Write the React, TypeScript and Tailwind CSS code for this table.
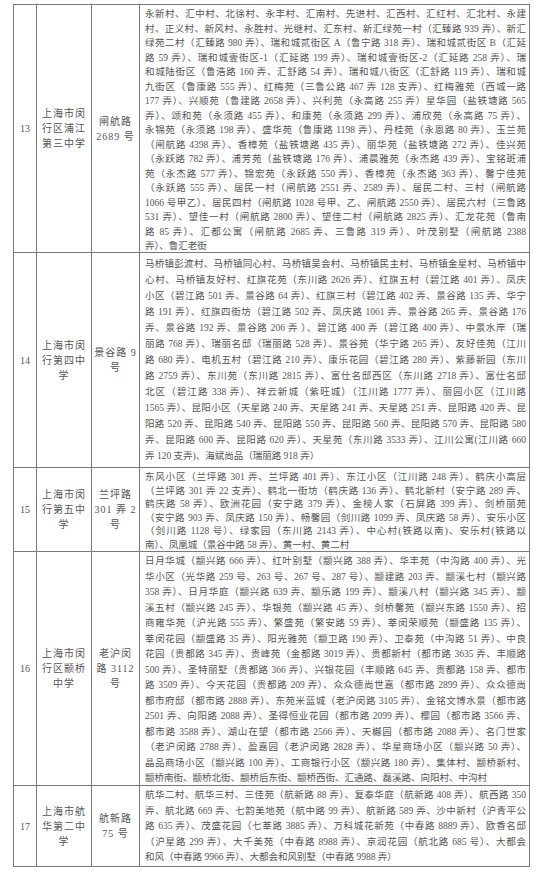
import React from "react";

type Row = {
  no: string;
  school: string[];
  addr: string[];
  lines: string[];
  h: string;
  lead: string;
  pt: string;
};

const rows: Row[] = [
  {
    no: "13",
    school: ["上海市闵", "行区浦江", "第三中学"],
    addr: ["闸航路", "2689 号"],
    h: "h-[248px]",
    lead: "leading-[14.5px]",
    pt: "pt-[2px]",
    lines: [
      "永新村、汇中村、北徐村、永丰村、汇南村、先进村、汇西村、汇红村、汇北村、永建",
      "村、正义村、新风村、永胜村、光继村、汇东村、新汇绿苑一村（汇臻路 939 弄）、新汇",
      "绿苑二村（汇臻路 980 弄）、瑞和城贰街区 A（鲁宁路 318 弄）、瑞和城贰街区 B（汇延",
      "路 59 弄）、瑞和城壹街区-1（汇延路 199 弄）、瑞和城壹街区-2（汇延路 258 弄）、瑞",
      "和城陆街区（鲁浩路 160 弄、汇舒路 54 弄）、瑞和城八街区（汇舒路 119 弄）、瑞和城",
      "九街区（鲁康路 555 弄）、红梅苑（三鲁公路 467 弄 128 支弄）、红梅雅苑（西城一路",
      "177 弄）、兴顺苑（鲁建路 2658 弄）、兴利苑（永高路 255 弄）星华园（盐铁塘路 565",
      "弄）、颂和苑（永须路 455 弄）、和康苑（永须路 299 弄）、浦欣苑（永高路 75 弄）、",
      "永锦苑（永须路 198 弄）、盛华苑（鲁康路 1198 弄）、丹桂苑（永恩路 80 弄）、玉兰苑",
      "（闸航路 4398 弄）、香樟苑（盐铁塘路 435 弄）、丽华苑（盐铁塘路 272 弄）、佳兴苑",
      "（永跃路 782 弄）、浦芳苑（盐铁塘路 176 弄）、浦晨雅苑（永杰路 439 弄）、宝铭斑浦",
      "苑（永杰路 577 弄）、锦宏苑（永跃路 550 弄）、香樟苑（永杰路 363 弄）、馨宁佳苑",
      "（永跃路 555 弄）、居民一村（闸航路 2551 弄、2589 弄）、居民二村、三村（闸航路",
      "1066 号甲乙）、居民四村（闸航路 1028 号甲、乙、闸航路 2550 弄）、居民六村（三鲁路",
      "531 弄）、望佳一村（闸航路 2800 弄）、望佳二村（闸航路 2825 弄）、汇龙花苑（鲁南",
      "路 85 弄）、汇都公寓（闸航路 2685 弄、三鲁路 319 弄）、叶茂别墅（闸航路 2388",
      "弄）、鲁汇老街",
    ],
  },
  {
    no: "14",
    school: ["上海市闵", "行第四中", "学"],
    addr: ["景谷路 9", "号"],
    h: "h-[215px]",
    lead: "leading-[16px]",
    pt: "pt-[3px]",
    lines: [
      "马桥镇彭渡村、马桥镇同心村、马桥镇吴会村、马桥镇民主村、马桥镇金星村、马桥镇中",
      "心村、马桥镇友好村、红旗花苑（东川路 2626 弄）、红旗五村（碧江路 401 弄）、凤庆",
      "小区（碧江路 501 弄、景谷路 64 弄）、红旗三村（碧江路 402 弄、景谷路 135 弄、华宁",
      "路 191 弄）、红旗四街坊（碧江路 502 弄、凤庆路 1061 弄、景谷路 265 弄、景谷路 176",
      "弄、景谷路 192 弄、景谷路 206 弄 ）、碧江路 400 弄（碧江路 400 弄）、中景水岸（瑞",
      "丽路 768 弄）、瑞丽名邸（瑞丽路 528 弄）、景谷苑（华宁路 265 弄）、友好佳苑（江川",
      "路 680 弄）、电机五村（碧江路 210 弄）、康乐花园（碧江路 280 弄）、紫藤新园（东川",
      "路 2759 弄）、东川苑（东川路 2815 弄）、富仕名邸西区（东川路 2718 弄）、富仕名邸",
      "北区（碧江路 338 弄）、祥云新城（紫旺城）（江川路 1777 弄）、丽园小区（江川路",
      "1565 弄）、昆阳小区（天星路 240 弄、天星路 241 弄、天星路 251 弄、昆阳路 420 弄、昆",
      "阳路 520 弄、昆阳路 540 弄、昆阳路 550 弄、昆阳路 560 弄、昆阳路 570 弄、昆阳路 580",
      "弄、昆阳路 600 弄、昆阳路 620 弄）、天星苑（东川路 3533 弄）、江川公寓(江川路 660",
      "弄 120 支弄)、海斌尚品（瑞丽路 918 弄）",
    ],
  },
  {
    no: "15",
    school: ["上海市闵", "行第五中", "学"],
    addr: ["兰坪路", "301 弄 2", "号"],
    h: "h-[84px]",
    lead: "leading-[13.5px]",
    pt: "pt-[3px]",
    lines: [
      "东风小区（兰坪路 301 弄、兰坪路 401 弄）、东江小区（江川路 248 弄）、鹤庆小高层",
      "（兰坪路 301 弄 22 支弄）、鹤北一街坊（鹤庆路 136 弄）、鹤北新村（安宁路 289 弄、",
      "鹤庆路 58 弄）、欧洲花园（安宁路 379 弄）、金榜人家（石屏路 399 弄）、剑桥丽苑",
      "（安宁路 903 弄、凤庆路 150 弄）、畅馨园（剑川路 1099 弄、凤庆路 58 弄）、安乐小区",
      "（剑川路 1128 号）、绿家园（东川路 2143 弄）、中心村(铁路以南)、安乐村(铁路以",
      "南）、凤凰城（景谷中路 58 弄）、黄一村、黄二村",
    ],
  },
  {
    no: "16",
    school: ["上海市闵", "行区颛桥", "中学"],
    addr: ["老沪闵", "路 3112", "号"],
    h: "h-[234px]",
    lead: "leading-[15.5px]",
    pt: "pt-[2px]",
    lines: [
      "日月华城（颛兴路 666 弄）、红叶别墅（颛兴路 388 弄）、华丰苑（中沟路 400 弄）、光",
      "华小区（光华路 259 号、263 号、267 号、287 号）、颛建路 203 弄、颛溪七村（颛兴路",
      "358 弄）、日月华庭（颛兴路 639 弄、颛乐路 199 弄）、颛溪八村（颛兴路 345 弄）、颛",
      "溪五村（颛兴路 245 弄）、华银苑（颛兴路 45 弄）、剑桥馨苑（颛兴东路 1550 弄）、招",
      "商雍华苑（沪光路 555 弄）、繁盛苑（繁安路 59 弄）、莘闵荣顺苑（颛盛路 135 弄）、",
      "莘闵花园（颛盛路 35 弄）、阳光雅苑（颛卫路 190 弄）、卫泰苑（中沟路 51 弄）、中良",
      "花园（贵都路 345 弄）、贵峰苑（金都路 3019 弄）、贵都新村（都市路 3635 弄、丰顺路",
      "500 弄）、圣特丽墅（贵都路 366 弄）、兴银花园（丰顺路 645 弄、贵都路 158 弄、都市",
      "路 3509 弄）、今天花园（贵都路 209 弄）、众众德尚世嘉（都市路 2899 弄）、众众德尚",
      "都市府邸（都市路 2888 弄）、东苑米蓝城（老沪闵路 3105 弄）、金铭文博水景（都市路",
      "2501 弄、向阳路 2088 弄）、圣得恒业花园（都市路 2099 弄）、樱园（都市路 3566 弄、",
      "都市路 3588 弄）、湖山在望（都市路 2566 弄）、天樾园（都市路 2088 弄）、名门世家",
      "（老沪闵路 2788 弄）、盈嘉园（老沪闵路 2828 弄）、华星商场小区（颛兴路 50 弄）、",
      "晶品商场小区（颛兴路 100 弄）、工商银行小区（颛兴路 180 弄）、集体村、颛桥新村、",
      "颛桥南街、颛桥北街、颛桥后东街、颛桥西街、汇通路、磊溪路、向阳村、中沟村",
    ],
  },
  {
    no: "17",
    school: ["上海市航", "华第二中", "学"],
    addr: ["航新路", "75 号"],
    h: "h-[81px]",
    lead: "leading-[15.6px]",
    pt: "pt-[2px]",
    lines: [
      "航华二村、航华三村、三佳苑（航新路 88 弄）、复泰华庭（航新路 408 弄）、航西路 350",
      "弄、航北路 669 弄、七韵美地苑（航中路 99 弄）、航新路 589 弄、沙中新村（沪青平公",
      "路 635 弄）、茂盛花园（七莘路 3885 弄）、万科城花新苑（中春路 8889 弄）、欧香名邸",
      "（沪星路 299 弄）、大千美苑（中春路 8988 弄）、京润花园（航北路 685 号）、大都会",
      "和风（中春路 9966 弄）、大都会和风别墅（中春路 9988 弄）",
    ],
  },
];

export default function App() {
  return (
    <div
      lang="zh-CN"
      className="w-[550px] h-[880px] bg-white pt-[4px] pl-[13px] font-['Liberation_Serif','Noto_Sans_CJK_SC',serif] text-[10px] text-[#555555]"
    >
      <div className="w-[517px] border-t border-r border-[#7a7a7a]">
        {rows.map((r) => (
          <div
            key={r.no}
            className={`grid grid-cols-[23px_55px_48px_1fr] border-b border-[#7a7a7a] ${r.h}`}
          >
            <div className="border-l border-[#7a7a7a] flex items-center justify-center">
              {r.no}
            </div>
            <div className="border-l border-[#7a7a7a] flex flex-col items-center justify-center leading-[15px] tracking-[1px]">
              {r.school.map((s, i) => (
                <div key={i}>{s}</div>
              ))}
            </div>
            <div className="border-l border-[#7a7a7a] flex flex-col items-center justify-center leading-[15px] tracking-[1px]">
              {r.addr.map((s, i) => (
                <div key={i}>{s}</div>
              ))}
            </div>
            <div
              className={`border-l border-[#7a7a7a] pl-[5px] pr-[3px] text-[9.5px] overflow-hidden ${r.pt} ${r.lead}`}
            >
              {r.lines.map((l, i) => (
                <div
                  key={i}
                  className={
                    i < r.lines.length - 1
                      ? "whitespace-nowrap text-justify [text-align-last:justify]"
                      : "whitespace-nowrap"
                  }
                >
                  {l}
                </div>
              ))}
            </div>
          </div>
        ))}
      </div>
    </div>
  );
}
